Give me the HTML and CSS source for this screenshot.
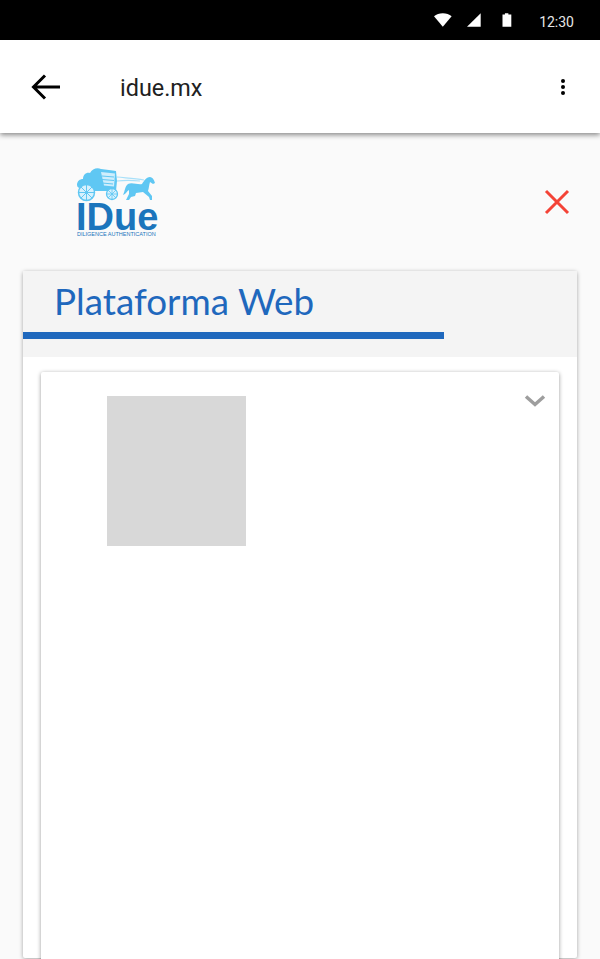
FILE: index.html
```html
<!DOCTYPE html>
<html lang="en">
<head>
    <meta charset="UTF-8">
    <meta name="viewport" content="width=device-width, initial-scale=1.0">
    <title>idue.mx</title>
    <link rel="stylesheet" href="styles.css">
</head>
<body>
    <!-- Android status bar -->
    <div class="status-bar">
        <svg class="st-wifi" width="18" height="14" viewBox="0 0 18 14"><path d="M0 3.2C2.4 1.2 5.500 0 9 0s6.600 1.200 9 3.200L9 14z" fill="#fff"/></svg>
        <svg class="st-signal" width="15" height="14" viewBox="0 0 15 14"><path d="M0 14L14 0v14z" fill="#fff"/></svg>
        <svg class="st-battery" width="10" height="14" viewBox="0 0 10 14"><path d="M3 0h3.500v1.500H9.500V14H.5V1.500H3z" fill="#fff"/></svg>
        <span class="st-time">12:30</span>
    </div>

    <header class="app-bar">
        <svg class="back" width="30" height="28" viewBox="0 0 30 28"><path d="M29 14H3M14 2.500L2.500 14 14 25.500" fill="none" stroke="#000" stroke-width="3"/></svg>
        <span class="app-title">idue.mx</span>
        <svg class="more" width="4" height="16" viewBox="0 0 4 16"><circle cx="2" cy="2" r="2"/><circle cx="2" cy="8" r="2"/><circle cx="2" cy="14" r="2"/></svg>
    </header>

    <main class="content">
        <div class="top-row">
            <div class="logo">
                <svg class="logo-art" width="82" height="36" viewBox="0 0 82 36">
                    <path d="M1 18c0-4 3-6 6-6 0-4 3-7 7-6 2-4 7-6 11-4 5 1 11 1 15 2l1 10-1 10H14C9 20 1 23 1 18z" fill="#5fc7f3"/>
                    <path d="M25 5l14 1.500-1 13-10-1z" fill="#cfeefc"/>
                    <path d="M26 9l12 1M26 12.500l12 1M26 16l11 1" stroke="#5fc7f3"/>
                    <circle cx="10.500" cy="25.500" r="8" fill="#d6f1fd" stroke="#5fc7f3" stroke-width="1.500"/>
                    <path d="M10.500 17.500v16M2.500 25.500h16M5 20l11 11M16 20L5 31" stroke="#5fc7f3"/>
                    <circle cx="36" cy="27" r="5.500" fill="#d6f1fd" stroke="#5fc7f3" stroke-width="1.300"/>
                    <path d="M36 21.500v11M30.500 27h11M32 23l8 8M40 23l-8 8" stroke="#5fc7f3" stroke-width=".8"/>
                    <path d="M41 10c9 1 17 1 27 3M41 14c8-1 14-1 23 0" fill="none" stroke="#a8e0f9" stroke-width="1.200"/>
                    <path d="M52 17C56 15 62 18 66 17 68 14 70 10 74 10 76 10 78 12 79 16L77 17 74 15C73 18 73 21 72 24L76 29V33H74L73 30 67 25 60 26 59 29 55 30 53 33H50L53 27V23C51 24 50 27 47 28 49 24 49 19 52 17z" fill="#5fc7f3"/>
                </svg>
                <div class="logo-name">IDue</div>
                <div class="logo-sub">DILIGENCE AUTHENTICATION</div>
            </div>
            <svg class="close" width="26" height="26" viewBox="0 0 26 26"><path d="M2 2l22 22M24 2L2 24" stroke="#f44336" stroke-width="3"/></svg>
        </div>

        <section class="card">
            <div class="card-head">
                <h1 class="card-title">Plataforma Web</h1>
                <div class="title-rule"></div>
            </div>
            <div class="card-body">
                <div class="inner-card">
                    <div class="thumb"></div>
                    <svg class="chevron" width="22" height="14" viewBox="0 0 22 14"><path d="M2 2.500l9 8 9-8" fill="none" stroke="#9e9e9e" stroke-width="3.500"/></svg>
                </div>
            </div>
        </section>
    </main>
</body>
</html>
```

FILE: styles.css
```css
html, body {
    margin: 0;
    height: 959px;
    overflow: hidden;
}

body {
    display: flex;
    flex-direction: column;
    background: #fafafa;
    font-family: Roboto, "Liberation Sans", sans-serif;
}

/* Status bar */
.status-bar {
    height: 40px;
    flex: none;
    display: flex;
    align-items: center;
    background: #000;
    padding: 0 26px 0 434px;
    box-sizing: border-box;
}

.st-wifi {
    margin-right: 15px;
}

.st-signal {
    margin-right: 21px;
}

.st-battery {
    margin-right: 27px;
}

.st-time {
    padding-top: 4px;
    font-size: 14px;
    color: #e6e6e6;
}

/* App bar */
.app-bar {
    height: 93px;
    flex: none;
    display: flex;
    align-items: center;
    box-sizing: border-box;
    padding: 0 35px 0 31px;
    background: #fff;
    box-shadow: 0 2px 5px rgba(0, 0, 0, 0.45);
    position: relative;
}

.app-title {
    margin-left: 59px;
    padding-top: 2px;
    font-size: 23.4px;
    color: #212121;
    flex: 1;
}

/* Content */
.content {
    flex: 1;
    display: flex;
    flex-direction: column;
    padding: 0 23px;
    min-height: 0;
}

.top-row {
    height: 138px;
    flex: none;
    display: flex;
    align-items: flex-start;
    justify-content: space-between;
    box-sizing: border-box;
    padding: 34px 7px 0 53px;
}

.logo {
    width: 82px;
    display: flex;
    flex-direction: column;
    align-items: flex-start;
}

.logo-art {
    display: block;
}

.logo-name {
    font-family: "Liberation Sans", sans-serif;
    font-weight: 700;
    font-size: 38px;
    line-height: 28px;
    color: #1b75bc;
}

.logo-sub {
    margin-left: 1px;
    font-family: "Liberation Sans", sans-serif;
    font-size: 5.5px;
    line-height: 6px;
    color: #1b75bc;
    white-space: nowrap;
}

.close {
    margin-top: 22px;
}

/* Card */
.card {
    flex: 1;
    min-height: 0;
    display: flex;
    flex-direction: column;
    background: #fff;
    border-radius: 2px;
    box-shadow: 0 1px 4px rgba(0, 0, 0, 0.35);
    margin-bottom: 1px;
}

.card-head {
    height: 86px;
    flex: none;
    background: #f4f4f4;
    box-sizing: border-box;
    padding-top: 8px;
}

.card-title {
    margin: 0 0 0 31px;
    height: 53px;
    font-family: Lato, sans-serif;
    font-weight: 400;
    font-size: 36.8px;
    line-height: 44px;
    color: #1f68bd;
    white-space: nowrap;
}

.title-rule {
    width: 421px;
    height: 7px;
    background: #1f68bd;
}

.card-body {
    flex: 1;
    min-height: 0;
    padding: 15px 18px 0;
}

.inner-card {
    height: 640px;
    position: relative;
    box-sizing: border-box;
    padding: 24px 0 0 66px;
    background: #fff;
    border-radius: 2px;
    box-shadow: 0 1px 4px rgba(0, 0, 0, 0.4);
}

.thumb {
    width: 139px;
    height: 150px;
    background: #d8d8d8;
}

.chevron {
    position: absolute;
    top: 22px;
    right: 13px;
}
```
